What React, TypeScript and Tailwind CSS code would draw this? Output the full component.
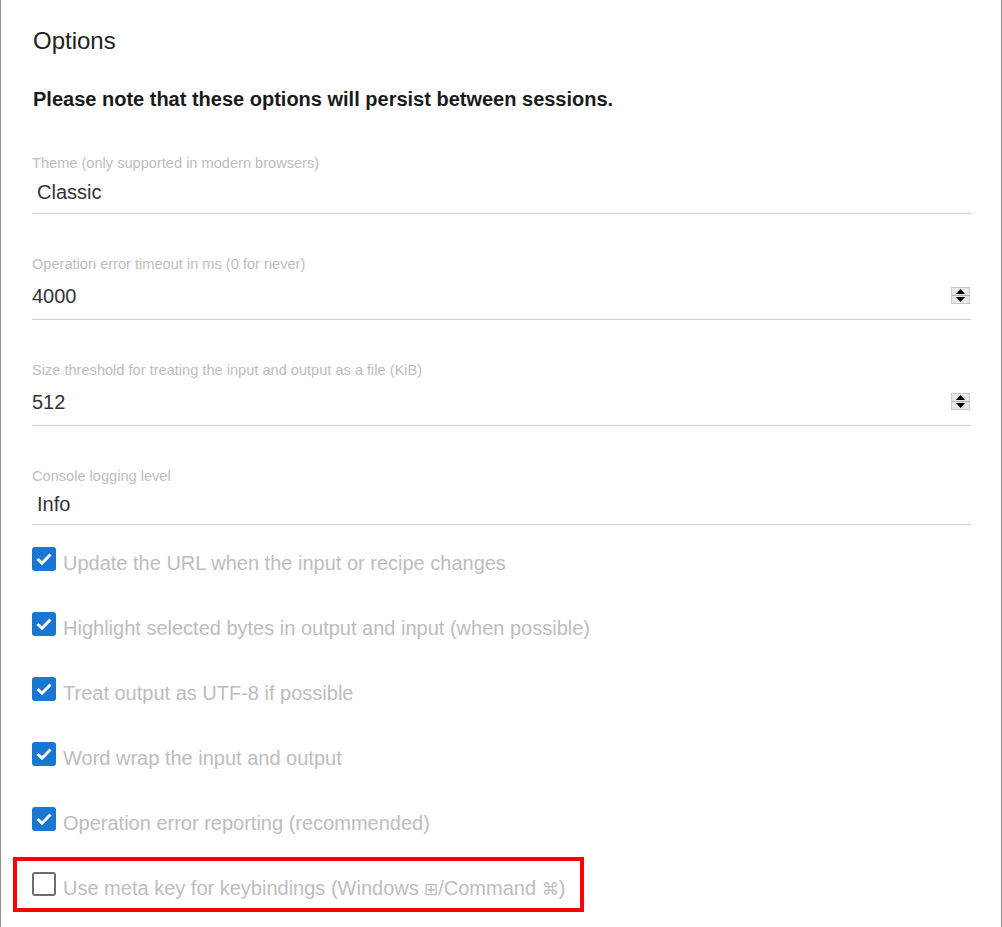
import React from "react";

const Spinner = () => (
  <div className="flex h-[17px] w-[19px] flex-col border border-[#c8c8c8] bg-[#e8e8e8]">
    <div className="flex flex-1 items-center justify-center border-b border-[#b0b0b0]">
      <svg width="9" height="5" viewBox="0 0 9 5">
        <path d="M0 5 L4.5 0 L9 5 Z" fill="#000" />
      </svg>
    </div>
    <div className="flex flex-1 items-center justify-center">
      <svg width="9" height="5" viewBox="0 0 9 5">
        <path d="M0 0 L4.5 5 L9 0 Z" fill="#000" />
      </svg>
    </div>
  </div>
);

type FieldProps = {
  label: string;
  value: string;
  height: string;
  number?: boolean;
  indent?: boolean;
};

const Field = ({ label, value, height, number, indent }: FieldProps) => (
  <div className="mt-[42px] first:mt-0">
    <div className="text-[14.6px] leading-[16px] text-[#bdbdbd]">{label}</div>
    <div className={`flex items-center justify-between border-b border-[#cfcfcf] ${height}`}>
      <span className={`text-[20px] text-[#333338] ${indent ? "pl-[5px]" : ""}`}>{value}</span>
      {number && (
        <div className="mr-[1px]">
          <Spinner />
        </div>
      )}
    </div>
  </div>
);

const Check = ({ checked }: { checked: boolean }) =>
  checked ? (
    <div className="flex h-[24px] w-[24px] shrink-0 items-center justify-center rounded-[3px] bg-[#1976d2]">
      <svg width="18" height="14" viewBox="0 0 18 14">
        <path d="M2.5 7 L7 11.2 L15.5 2.5" fill="none" stroke="#fff" strokeWidth="3" />
      </svg>
    </div>
  ) : (
    <div className="h-[24px] w-[24px] shrink-0 rounded-[3px] border-2 border-[#6e6e6e] bg-white" />
  );

const options = [
  "Update the URL when the input or recipe changes",
  "Highlight selected bytes in output and input (when possible)",
  "Treat output as UTF-8 if possible",
  "Word wrap the input and output",
  "Operation error reporting (recommended)",
];

export default function App() {
  return (
    <div className="min-h-[927px] w-[1002px] border-x border-[#8c8c8c] bg-white font-['Liberation_Sans',Arial,sans-serif]">
      <div className="pl-[31px] pr-[30px] pt-[26px]">
        <h4 className="pl-[1px] text-[24px] leading-[30px] text-[#222]">Options</h4>
        <p className="mt-[32px] pl-[1px] text-[20px] font-bold leading-[22px] text-[#1a1a1a]">
          Please note that these options will persist between sessions.
        </p>

        <div className="mt-[45px]">
          <Field label="Theme (only supported in modern browsers)" value="Classic" height="h-[43px]" indent />
          <Field label="Operation error timeout in ms (0 for never)" value="4000" height="h-[48px]" number />
          <Field
            label="Size threshold for treating the input and output as a file (KiB)"
            value="512"
            height="h-[48px]"
            number
          />
          <Field label="Console logging level" value="Info" height="h-[41px]" indent />
        </div>

        <div className="mt-[22px] flex flex-col gap-[41px]">
          {options.map((o) => (
            <div key={o} className="flex h-[24px] items-center gap-[7px]">
              <Check checked />
              <span className="mt-[7px] text-[20px] text-[#bdbdbd]">{o}</span>
            </div>
          ))}
          <div className="relative flex h-[24px] items-center gap-[7px]">
            <span className="absolute left-[-19px] top-[-15px] bottom-[-16px] w-[571px] border-4 border-[#ff0000]" />
            <Check checked={false} />
            <span className="mt-[7px] text-[20px] text-[#bdbdbd]">
              Use meta key for keybindings (Windows <span className="text-[17px]">⊞</span>/Command{" "}
              <span className="text-[17px]">⌘</span>)
            </span>
          </div>
        </div>
      </div>
    </div>
  );
}
